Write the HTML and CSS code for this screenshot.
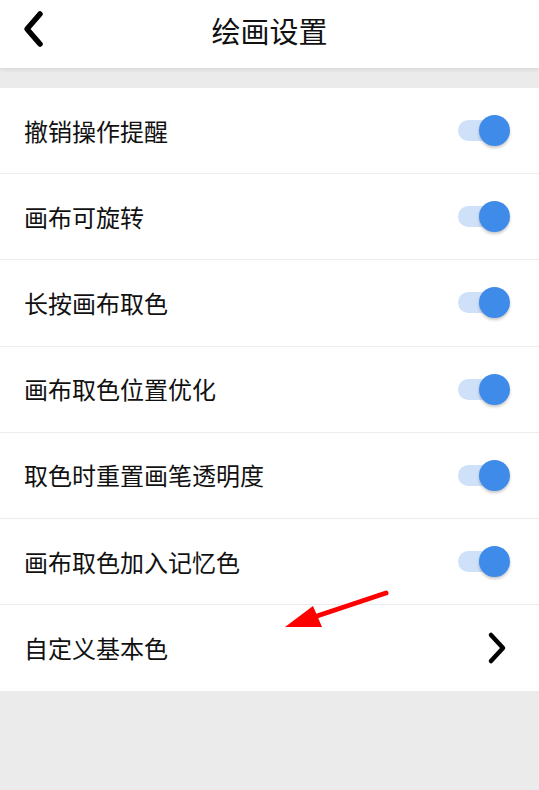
FILE: index.html
```html
<!DOCTYPE html>
<html lang="zh">
<head>
<meta charset="utf-8">
<link rel="stylesheet" href="styles.css">
</head>
<body>
<div class="page">
  <header class="topbar">
    <svg class="back" width="26" height="38" viewBox="0 0 26 38"><path d="M19 4 L6 19 L19 34" fill="none" stroke="#000" stroke-width="5.5" stroke-linecap="round" stroke-linejoin="round"/></svg>
    <h1 class="title">绘画设置</h1>
  </header>
  <ul class="list">
    <li class="row"><span class="label">撤销操作提醒</span><span class="switch"><span class="knob"></span></span></li>
    <li class="row"><span class="label">画布可旋转</span><span class="switch"><span class="knob"></span></span></li>
    <li class="row"><span class="label">长按画布取色</span><span class="switch"><span class="knob"></span></span></li>
    <li class="row"><span class="label">画布取色位置优化</span><span class="switch"><span class="knob"></span></span></li>
    <li class="row"><span class="label">取色时重置画笔透明度</span><span class="switch"><span class="knob"></span></span></li>
    <li class="row"><span class="label">画布取色加入记忆色</span><span class="switch"><span class="knob"></span></span></li>
    <li class="row last"><span class="label">自定义基本色</span>
      <svg class="chev" width="22" height="34" viewBox="0 0 22 34"><path d="M5 4 L17 17 L5 30" fill="none" stroke="#000" stroke-width="4.5" stroke-linecap="round" stroke-linejoin="round"/></svg>
    </li>
  </ul>
  <svg class="arrow" width="539" height="790" viewBox="0 0 539 790">
    <line x1="386" y1="593" x2="305" y2="620" stroke="#f00" stroke-width="5" stroke-linecap="round"/>
    <polygon points="285,627 313,606 322,627" fill="#f00"/>
  </svg>
</div>
</body>
</html>
```
FILE: styles.css
```css
* { box-sizing: border-box; }
html, body { margin: 0; padding: 0; }
body {
  background: #ebebeb;
  font-family: "Noto Sans CJK SC", "Noto Sans", sans-serif;
  width: 539px;
  height: 790px;
  overflow: hidden;
}
.page { position: relative; width: 539px; height: 790px; }
.topbar {
  height: 68px;
  background: #fff;
  display: flex;
  align-items: center;
  justify-content: center;
  padding-bottom: 8px;
  position: relative;
  box-shadow: 0 2px 4px rgba(0,0,0,0.08);
  z-index: 1;
}
.back { position: absolute; left: 21px; top: 10px; }
.title {
  margin: 0;
  font-size: 29px;
  font-weight: 400;
  color: #111;
  line-height: 1;
}
.list {
  list-style: none;
  margin: 20px 0 0 0;
  padding: 0;
  background: #fff;
}
.row {
  height: 86.2px;
  display: flex;
  align-items: center;
  justify-content: space-between;
  padding: 0 31px 0 24px;
  border-bottom: 1px solid #ececec;
}
.row.last { border-bottom: none; padding-right: 31px; }
.label { font-size: 24px; color: #111; line-height: 1; }
.switch {
  position: relative;
  width: 50px;
  height: 21px;
  border-radius: 11px;
  background: #cfe0f9;
}
.knob {
  position: absolute;
  right: -2px;
  top: -5px;
  width: 31px;
  height: 31px;
  border-radius: 50%;
  background: #3f8be9;
  box-shadow: 0 2px 3px rgba(0,0,0,0.22);
}
.chev { display: block; }
.arrow { position: absolute; left: 0; top: 0; pointer-events: none; }
```
